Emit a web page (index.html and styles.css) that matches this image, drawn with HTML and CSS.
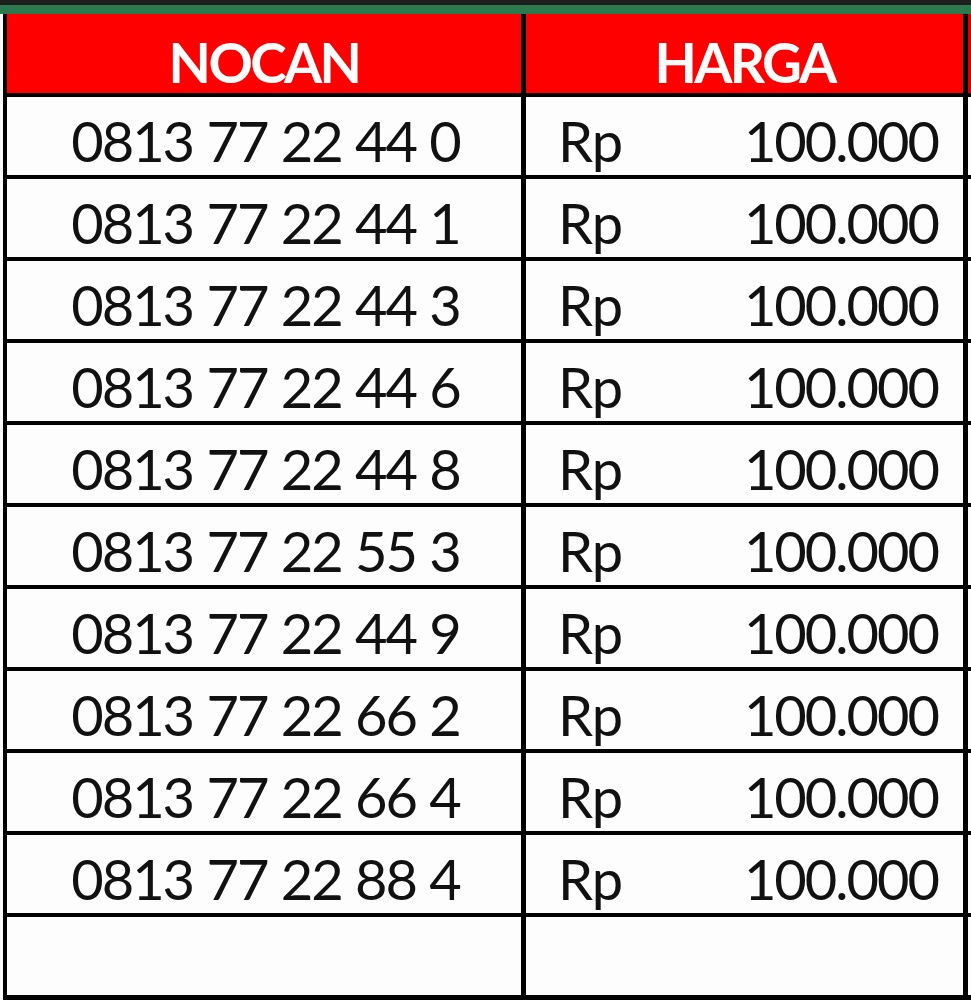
FILE: index.html
```html
<!DOCTYPE html>
<html lang="id">
<head>
<meta charset="utf-8">
<title>Nocan Harga</title>
<link rel="stylesheet" href="styles.css">
</head>
<body>
<div class="topbar"></div>
<div class="greenbar"></div>
<div class="sheet">
  <div class="cell head">NOCAN</div>
  <div class="cell head">HARGA</div>
  <div class="cell head edge"></div>

  <div class="cell num">0813 77 22 44 0</div>
  <div class="cell price"><span>Rp</span><span>100.000</span></div>
  <div class="cell edge"></div>

  <div class="cell num">0813 77 22 44 1</div>
  <div class="cell price"><span>Rp</span><span>100.000</span></div>
  <div class="cell edge"></div>

  <div class="cell num">0813 77 22 44 3</div>
  <div class="cell price"><span>Rp</span><span>100.000</span></div>
  <div class="cell edge"></div>

  <div class="cell num">0813 77 22 44 6</div>
  <div class="cell price"><span>Rp</span><span>100.000</span></div>
  <div class="cell edge"></div>

  <div class="cell num">0813 77 22 44 8</div>
  <div class="cell price"><span>Rp</span><span>100.000</span></div>
  <div class="cell edge"></div>

  <div class="cell num">0813 77 22 55 3</div>
  <div class="cell price"><span>Rp</span><span>100.000</span></div>
  <div class="cell edge"></div>

  <div class="cell num">0813 77 22 44 9</div>
  <div class="cell price"><span>Rp</span><span>100.000</span></div>
  <div class="cell edge"></div>

  <div class="cell num">0813 77 22 66 2</div>
  <div class="cell price"><span>Rp</span><span>100.000</span></div>
  <div class="cell edge"></div>

  <div class="cell num">0813 77 22 66 4</div>
  <div class="cell price"><span>Rp</span><span>100.000</span></div>
  <div class="cell edge"></div>

  <div class="cell num">0813 77 22 88 4</div>
  <div class="cell price"><span>Rp</span><span>100.000</span></div>
  <div class="cell edge"></div>

  <div class="cell"></div>
  <div class="cell"></div>
  <div class="cell edge"></div>
</div>
</body>
</html>
```

FILE: styles.css
```css
html, body {
  margin: 0;
  padding: 0;
  background: #fbfbfb;
  overflow: hidden;
  width: 971px;
  height: 1000px;
}

body {
  font-family: Lato, "Open Sans", "Liberation Sans", sans-serif;
  color: #111;
}

.topbar {
  height: 5px;
  background: #1e1e1e;
}

.greenbar {
  height: 9px;
  background: #2b7a4d;
}

.sheet {
  margin-left: 3px;
  width: 968px;
  box-sizing: border-box;
  display: grid;
  grid-template-columns: 514px 437px 3px;
  grid-template-rows: 79px repeat(11, 78px);
  column-gap: 5px;
  row-gap: 4px;
  padding: 0 0 5px 4px;
  background: #000;
}

.cell {
  background: #fdfdfd;
  display: flex;
  align-items: flex-end;
  font-size: 56px;
  line-height: 56px;
  letter-spacing: -1px;
  padding-bottom: 6px;
  box-sizing: border-box;
  white-space: nowrap;
}

.head {
  background: #ff0000;
  color: #fff;
  font-weight: 700;
  justify-content: center;
  font-size: 55px;
  letter-spacing: -2.6px;
  padding-bottom: 3px;
}

.head.edge {
  background: #d40000;
}

.num {
  justify-content: center;
  letter-spacing: -2px;
  word-spacing: 1px;
  padding-left: 3px;
}

.price {
  justify-content: space-between;
  padding-left: 32px;
  padding-right: 25px;
}

.price span:last-child {
  letter-spacing: -2px;
}
```
